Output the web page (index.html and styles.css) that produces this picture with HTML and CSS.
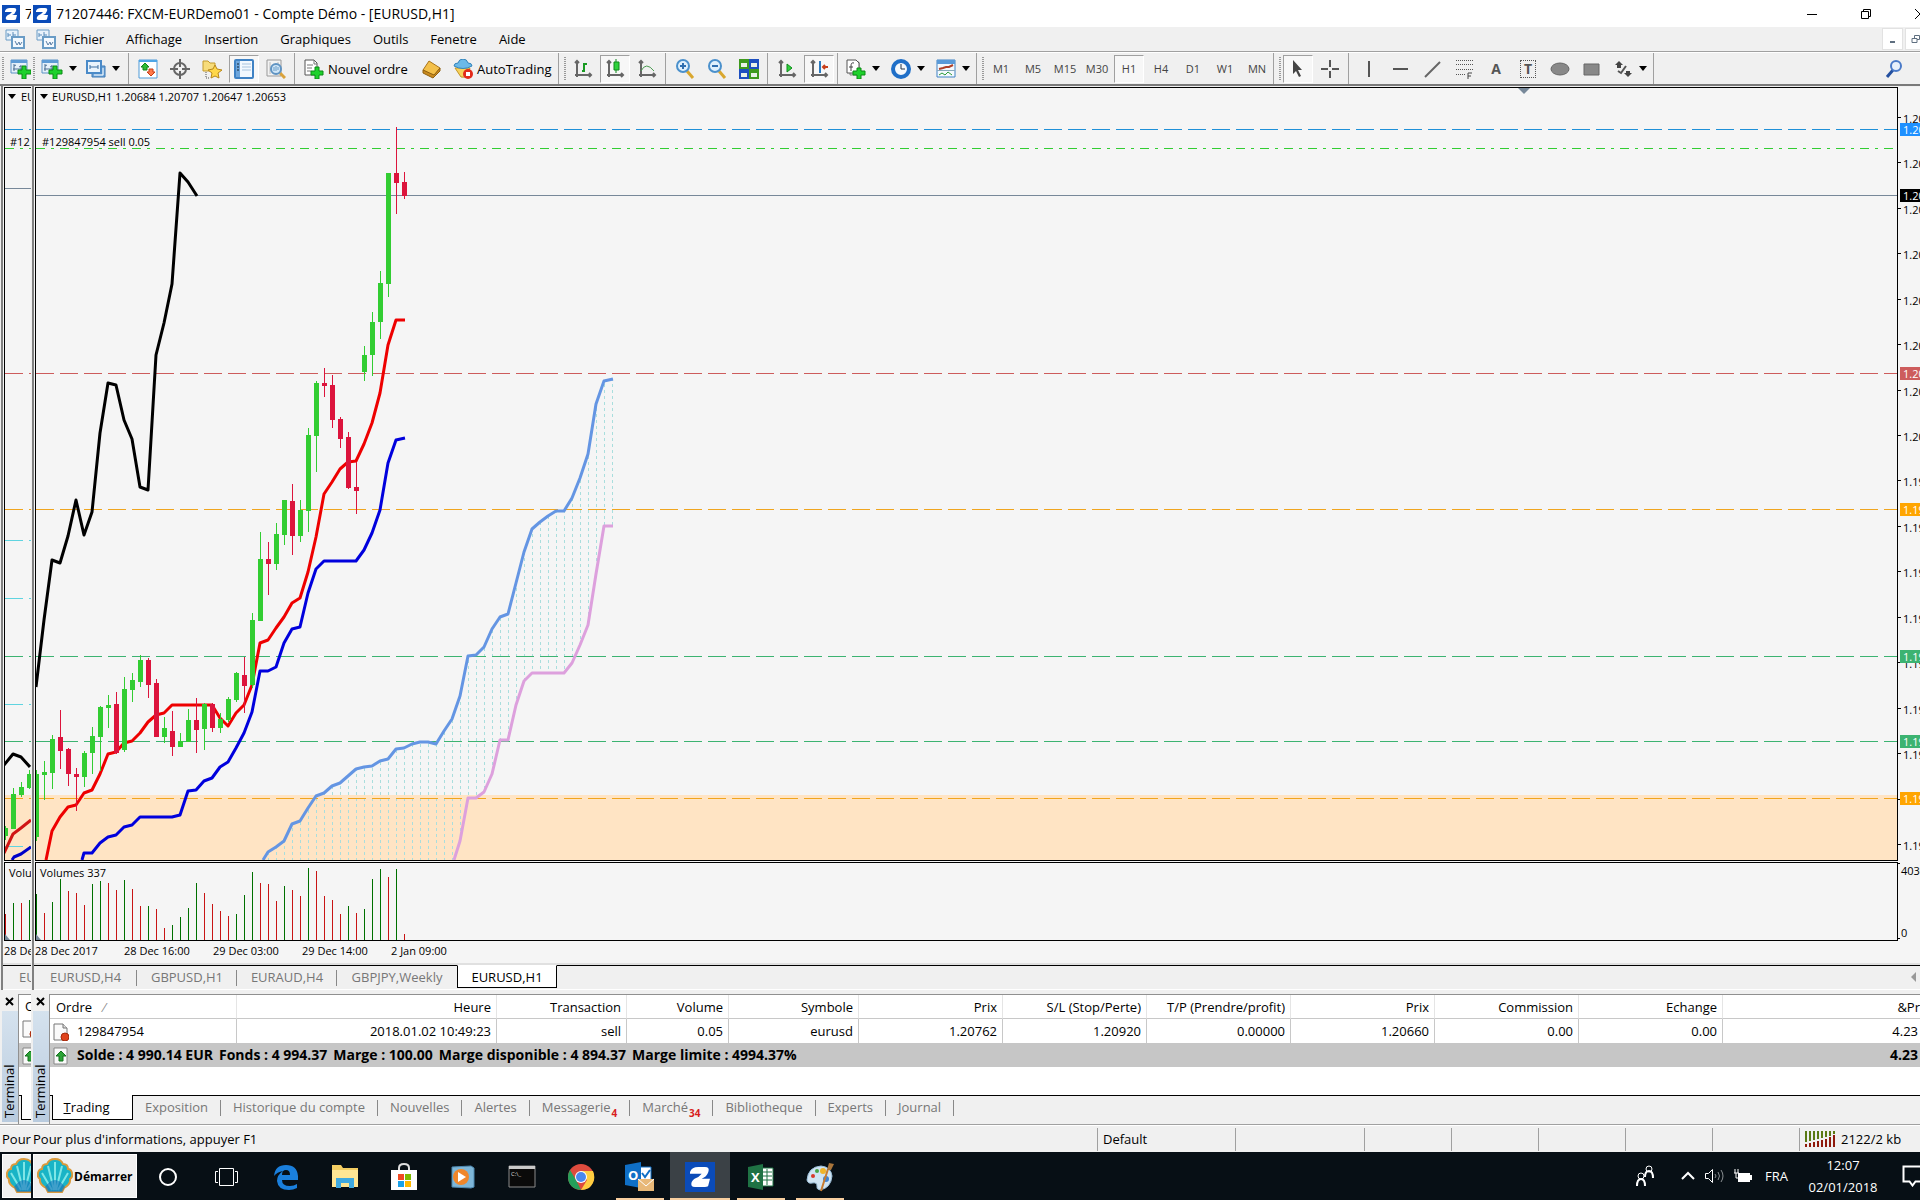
FILE: index.html
```html
<!DOCTYPE html>
<html lang="fr">

<head>
    <meta charset="UTF-8">
    <meta name="viewport" content="width=device-width, initial-scale=1.0">
    <title>71207446: FXCM-EURDemo01 - Compte Démo</title>
    <link rel="stylesheet" href="styles.css">
</head>

<body>
    <!-- shared icons -->
    <svg class="defs" aria-hidden="true">
        <symbol id="logo" viewBox="0 0 18 18">
            <rect width="18" height="18" fill="#0b4bb8" />
            <path d="M3 6Q4 3 8 3h4q3 0 2 3-1 3-4 4h5l-1 4q0 1-2 1H6q-3 0-2-3 1-2 4-3l2-2H3z" fill="#fff" />
        </symbol>
        <symbol id="windows" viewBox="0 0 20 20">
            <path d="M1 1h12v10H1z" fill="#e8f2fb" stroke="#6a9cc6" />
            <path d="M3 4v4M3 6h3M8 3v5M8 6h3" stroke="#5b8dbb" fill="none" />
            <path d="M7 8h12v11H7z" fill="#f4f9fe" stroke="#6a9cc6" stroke-width="2" />
            <path d="M10 12l2 4 2-3 1 3 2-3" stroke="#5b7fa6" fill="none" />
        </symbol>
        <symbol id="newchart" viewBox="0 0 22 20">
            <path d="M1 1h16v13H1z" fill="#e4f0fa" stroke="#5c93c4" />
            <path d="M1 1h16v3H1z" fill="#5c9bd6" />
            <path d="M4 5v7M3 10h9M11 6v6M4 7l2-1M9 8l2-1" stroke="#4b6f92" fill="none" />
            <path d="M12 7h4v4h5v4h-5v5h-4v-5H8v-4h4z" fill="#1ed12c" stroke="#0b8a14" />
        </symbol>
        <symbol id="order" viewBox="0 0 16 18">
            <path d="M1 1h9l4 4v12H1z" fill="#fafafa" stroke="#777" />
            <path d="M10 1v4h4" fill="#ddd" stroke="#777" />
            <circle cx="12" cy="14" r="4" fill="#e0431c" stroke="#a42a0c" />
        </symbol>
        <symbol id="balance" viewBox="0 0 16 18">
            <path d="M1 1h13v16H1z" fill="#fafafa" stroke="#888" />
            <path d="M8 4l5 5h-3v5H6V9H3z" fill="#2ca336" stroke="#12701c" />
        </symbol>
        <symbol id="cross" viewBox="0 0 9 9">
            <path d="M1 1l7 7M8 1L1 8" stroke="#000" stroke-width="2" />
        </symbol>
        <symbol id="shell" viewBox="0 0 36 38">
            <path d="M11 35L9 31Q2 27 3 22 0 20 1 16q1-4 4-4 0-5 5-5 2-5 8-5t8 5q5 0 5 5 3 0 4 4 1 4-2 6 1 5-6 9l-2 4z" fill="#19b4c6" stroke="#d99a3c" stroke-width="2" />
            <path d="M18 33V5M17 33L11 9M19 33l6-24M15 33L5 16M21 33l10-17" stroke="#7fe6e6" stroke-width="2" fill="none" />
            <path d="M8 30q10-14 20 0l-3 5H11z" fill="#1470b8" opacity=".6" />
        </symbol>
        <pattern id="hatch" width="8" height="6" patternUnits="userSpaceOnUse">
            <path d="M4.5 0v3" stroke="#a9dedd" />
        </pattern>
    </svg>

    <div class="desk">
        <!-- left monitor edge -->
        <div class="screen edge" aria-hidden="true">
            <div class="titlebar"><svg class="logo"><use href="#logo" /></svg><span class="title">7</span></div>
            <div class="menubar"><svg class="icon"><use href="#windows" /></svg></div>
            <div class="toolbar"><div class="group first"><i class="grip"></i><span class="tool drop"><svg class="icon wide"><use href="#newchart" /></svg></span></div></div>
            <div class="mdi">
                <div class="chart">
                    <svg class="plot">
                        <rect y="707" width="100%" height="100%" fill="#ffe4c4" />
                        <g class="levels">
                            <path d="M0 41.5H40" stroke="#1e90d8" />
                            <path class="dashdot" d="M0 60.5H40" stroke="#32cd32" />
                            <path class="solid" d="M0 100.5H40" stroke="#778899" />
                            <path d="M0 285.5H40" stroke="#cd5c5c" />
                            <path d="M0 421.5H40M0 710.5H40" stroke="#f0a51e" />
                            <path d="M0 568.5H40M0 653.5H40" stroke="#3cb371" />
                            <path d="M0 452.5H40M0 510.5H40M0 616.5H40M0 758.5H40" stroke="#5fd4e0" />
                        </g>
                        <g transform="translate(-5 -88)">
                            <path class="wick up" d="M5.5 826V840M13.5 788V829M21.5 782V797M29.5 770V789" />
                            <path class="body up" d="M5.5 828V836M13.5 794V829M21.5 787V795M29.5 774V788" />
                            <path class="line" stroke="#000" d="M4 765L13 754 21 757 30 767" />
                            <path class="line" stroke="#d01515" d="M4 853L13 834 21 828 31 820" />
                            <path class="line" stroke="#0000c8" d="M12 860L14 857 21 854 31 847" />
                        </g>
                        <path d="M3 6h8l-4 5z" />
                        <text x="16" y="13">EU</text>
                        <text x="5" y="58">#12</text>
                    </svg>
                    <svg class="volumes">
                        <g transform="translate(-5 -863)">
                            <path class="vol down" d="M5.5 914V940M21.5 903V940" />
                            <path class="vol up" d="M13.5 903V940M29.5 900V940" />
                            <path d="M5 934l5 6h-5z" fill="#778899" />
                        </g>
                        <text x="4" y="14">Volum</text>
                    </svg>
                    <div class="dates"><span>28 De</span></div>
                </div>
                <div class="charttabs"><button class="cut">EU</button></div>
            </div>
            <div class="terminal">
                <div class="side"><button class="close" tabindex="-1"><svg width="9" height="9"><use href="#cross" /></svg></button><span>Terminal</span></div>
                <div class="panel">
                    <div class="peek"><span>O</span><svg class="mini"><use href="#order" /></svg><div class="total"><svg class="mini"><use href="#balance" /></svg></div></div>
                    <div class="tabs"><button class="active" tabindex="-1"></button></div>
                </div>
            </div>
            <div class="status"><span class="hint">Pour</span></div>
            <div class="taskbar"><button class="start" tabindex="-1"><svg class="shell"><use href="#shell" /></svg></button></div>
        </div>

        <!-- main screen -->
        <div class="screen main">
            <header class="titlebar">
                <svg class="logo"><use href="#logo" /></svg>
                <span class="title">71207446: FXCM-EURDemo01 - Compte Démo - [EURUSD,H1]</span>
                <div class="winbtns">
                    <button aria-label="Réduire"><svg width="12" height="12"><path d="M1 6.5h10" stroke="#000" /></svg></button>
                    <button aria-label="Restaurer"><svg width="12" height="12"><path d="M1.5 3.5h7v7h-7zM3.5 3V1.5h7v7H9" stroke="#000" fill="none" /></svg></button>
                    <button aria-label="Fermer"><svg width="12" height="12"><path d="M1 1l10 10M11 1L1 11" stroke="#000" /></svg></button>
                </div>
            </header>

            <nav class="menubar">
                <svg class="icon"><use href="#windows" /></svg>
                <button>Fichier</button>
                <button>Affichage</button>
                <button>Insertion</button>
                <button>Graphiques</button>
                <button>Outils</button>
                <button>Fenetre</button>
                <button>Aide</button>
                <div class="mdibtns">
                    <button aria-label="Réduire le graphique"><svg width="8" height="10"><path d="M1 8h5" stroke="#5f6f80" stroke-width="2" /></svg></button>
                    <button aria-label="Restaurer le graphique"><svg width="10" height="10"><path d="M1 4.5h5v4H1zM3.5 4V1.5h5v4H6" stroke="#5f6f80" fill="none" /></svg></button>
                </div>
            </nav>

            <div class="toolbar">
                <div class="group first">
                    <i class="grip"></i>
                    <button class="tool drop" aria-label="Nouveau graphique"><svg class="icon wide"><use href="#newchart" /></svg></button>
                    <button class="tool drop" aria-label="Profils">
                        <svg class="icon" viewBox="0 0 20 20">
                            <path d="M6 7h13v11H6z" fill="#6ea6da" stroke="#3c78b4" />
                            <path d="M1 2h14v12H1z" fill="#eaf4fc" stroke="#4a8ac8" stroke-width="2" />
                            <path d="M4 8h8M4 6v4M12 6v4" stroke="#3c6ea0" />
                            <path d="M8 16h9v-7" stroke="#fff" fill="none" />
                        </svg>
                    </button>
                    <i class="sep"></i>
                    <button class="tool" aria-label="Observation du marché">
                        <svg class="icon" viewBox="0 0 20 20">
                            <path d="M1 1h18v18H1z" fill="#fff" stroke="#4f9bd8" /><path d="M1 1h18v2H1z" fill="#4fa6e6" />
                            <path d="M7 4l4 4H9v3H5V8H3z" fill="#2dbb34" stroke="#128418" />
                            <path d="M13 17l-4-4h2v-3h4v3h2z" fill="#ff7a4a" stroke="#c83c14" />
                        </svg>
                    </button>
                    <button class="tool" aria-label="Fenêtre des données">
                        <svg class="icon" viewBox="0 0 20 20"><circle cx="10" cy="10" r="6" fill="none" stroke="#666" stroke-width="2" /><path d="M10 0v8M10 12v8M0 10h8M12 10h8" stroke="#666" stroke-width="2" /></svg>
                    </button>
                    <button class="tool" aria-label="Navigateur">
                        <svg class="icon" viewBox="0 0 20 20">
                            <path d="M1 2h5l2 2h5v8H1z" fill="#f7dc7a" stroke="#c39a2c" />
                            <path d="M4 13v6h4" stroke="#555" stroke-dasharray="1 1" fill="none" />
                            <path d="M13 6l2 4 5 1-4 3 1 5-4-2-4 2 1-5-4-3 5-1z" fill="#ffd84a" stroke="#b8871a" />
                        </svg>
                    </button>
                    <button class="tool pressed" aria-label="Terminal">
                        <svg class="icon" viewBox="0 0 20 20">
                            <rect x="1" y="1" width="18" height="18" rx="1" fill="#f2f8fe" stroke="#3f82c4" stroke-width="2" />
                            <path d="M2 2h4v16H2z" fill="#6ea6dc" /><path d="M8 5h9M8 8h9M8 11h9" stroke="#a9c4de" />
                            <path d="M3 5h2M3 8h2M3 11h2" stroke="#123" />
                        </svg>
                    </button>
                    <button class="tool" aria-label="Testeur de stratégie">
                        <svg class="icon" viewBox="0 0 20 20">
                            <path d="M1 1h14v16H1z" fill="#f3f3f3" stroke="#999" /><path d="M4 3v12M12 3v4" stroke="#bbb" />
                            <path d="M14 14l5 5" stroke="#d9a23c" stroke-width="3" />
                            <circle cx="10" cy="10" r="5" fill="#cfe6f8" stroke="#5f93c2" stroke-width="2" />
                            <path d="M8 8v4M10 7v5M12 8v3" stroke="#6a9cc6" />
                        </svg>
                    </button>
                    <i class="sep"></i>
                    <button class="tool labelled order">
                        <svg class="icon" viewBox="0 0 20 20">
                            <path d="M1 1h9l3 3v12H1z" fill="#fff" stroke="#555" /><path d="M10 1v4h3M3 6h6M3 9h5M3 12h4" stroke="#777" fill="none" />
                            <path d="M11 8h4v4h4v4h-4v4h-4v-4H7v-4h4z" fill="#1ed12c" stroke="#0b8a14" />
                        </svg>Nouvel ordre</button>
                    <button class="tool" aria-label="MetaEditor">
                        <svg class="icon" viewBox="0 0 20 20"><path d="M2 11L8 2l11 7-6 8z" fill="#f3c04a" stroke="#a9741a" /><path d="M2 11v3l10 5 7-7V9l-6 7z" fill="#c98a1e" stroke="#8f6010" /></svg>
                    </button>
                    <button class="tool labelled auto">
                        <svg class="icon" viewBox="0 0 20 20">
                            <path d="M2 9l6 9q6 2 9-9z" fill="#f7d25c" stroke="#c29526" />
                            <path d="M1 7q0-3 4-3 1-4 5-4t5 4q4 0 4 3-9 5-18 0z" fill="#6bb9e8" stroke="#3585bb" />
                            <circle cx="15" cy="15" r="5" fill="#e22a1a" /><path d="M13 13h4v4h-4z" fill="#fff" />
                        </svg>AutoTrading</button>
                </div>
                <div class="group">
                    <i class="grip"></i>
                    <button class="tool" aria-label="Graphique en barres"><svg class="icon" viewBox="0 0 20 20"><path class="axes" d="M4 2v16M2 16h16M2 4l2-2 2 2M16 14l2 2-2 2" /><path d="M11 4v9M11 5h3M9 12h2" stroke="#189a22" stroke-width="2" /></svg></button>
                    <button class="tool pressed" aria-label="Chandeliers"><svg class="icon" viewBox="0 0 20 20"><path class="axes" d="M4 2v16M2 16h16M2 4l2-2 2 2M16 14l2 2-2 2" /><path d="M11 0v14" stroke="#0f8a1a" /><path d="M9 3h5v8H9z" fill="#2fd23c" stroke="#0f8a1a" /></svg></button>
                    <button class="tool" aria-label="Courbe"><svg class="icon" viewBox="0 0 20 20"><path class="axes" d="M4 2v16M2 16h16M2 4l2-2 2 2M16 14l2 2-2 2" /><path d="M4 12q5-10 13 0" stroke="#4a9a50" fill="none" /></svg></button>
                    <i class="sep"></i>
                    <button class="tool" aria-label="Zoom avant"><svg class="icon" viewBox="0 0 20 20"><path d="M12 12l6 7" stroke="#d9a72e" stroke-width="3" /><circle cx="8" cy="7" r="6" fill="#dff0fc" stroke="#4a90cc" stroke-width="2" /><path d="M5 7h6M8 4v6" stroke="#2f6fb0" stroke-width="2" /></svg></button>
                    <button class="tool" aria-label="Zoom arrière"><svg class="icon" viewBox="0 0 20 20"><path d="M12 12l6 7" stroke="#d9a72e" stroke-width="3" /><circle cx="8" cy="7" r="6" fill="#dff0fc" stroke="#4a90cc" stroke-width="2" /><path d="M5 7h6" stroke="#2f6fb0" stroke-width="2" /></svg></button>
                    <button class="tool" aria-label="Mosaïque"><svg class="icon" viewBox="0 0 20 20"><path d="M0 0h10v10H0zM10 10h10v10H10z" fill="#3f9a1e" /><path d="M10 0h10v10H10zM0 10h10v10H0z" fill="#1d4fc0" /><path d="M2 4h6v4H2zM12 4h6v4h-6zM2 14h6v4H2zM12 14h6v4h-6z" fill="#e8f2e8" /></svg></button>
                    <i class="sep"></i>
                    <button class="tool" aria-label="Défilement automatique"><svg class="icon" viewBox="0 0 20 20"><path class="axes" d="M4 2v16M2 16h16M2 4l2-2 2 2M16 14l2 2-2 2" /><path d="M10 5l5 4-5 4z" fill="#2fd23c" stroke="#0f8a1a" /></svg></button>
                    <button class="tool pressed" aria-label="Décalage"><svg class="icon" viewBox="0 0 20 20"><path class="axes" d="M4 2v16M2 16h16M2 4l2-2 2 2M16 14l2 2-2 2" /><path d="M11 2v12" stroke="#2a7ac0" stroke-width="2" /><path d="M19 8h-5M16 6l-2 2 2 2" stroke="#c8401c" stroke-width="2" fill="none" /></svg></button>
                    <i class="sep"></i>
                    <button class="tool drop" aria-label="Indicateurs"><svg class="icon" viewBox="0 0 20 20"><path d="M4 3h9v13H4z" fill="#ddd" stroke="#888" /><path d="M1 1h9l3 3v10H1z" fill="#fff" stroke="#555" /><path d="M8 4q-3-1-3 3v5M3 8h4" stroke="#444" fill="none" /><path d="M11 9h4v3h4v4h-4v4h-4v-4H7v-4h4z" fill="#1ed12c" stroke="#0b8a14" /></svg></button>
                    <button class="tool drop" aria-label="Périodicité"><svg class="icon" viewBox="0 0 20 20"><circle cx="10" cy="10" r="8" fill="#f4f8fc" stroke="#1f6fc8" stroke-width="4" /><path d="M10 5v5h4" stroke="#234" fill="none" /></svg></button>
                    <button class="tool drop" aria-label="Modèles"><svg class="icon" viewBox="0 0 20 20"><path d="M1 1h18v17H1z" fill="#f4f9fe" stroke="#3f82c4" /><path d="M1 1h18v4H1z" fill="#5a9ad8" /><path d="M3 10l4-1 3-1 3 0 4-2" stroke="#b04028" fill="none" stroke-width="2" /><path d="M1 11.500h18" stroke="#8ab" /><path d="M3 16l3-2 3 2 3-3 4 3" stroke="#2c9a38" fill="none" /></svg></button>
                </div>
                <div class="group">
                    <i class="grip"></i>
                    <button class="tool tf">M1</button>
                    <button class="tool tf">M5</button>
                    <button class="tool tf">M15</button>
                    <button class="tool tf">M30</button>
                    <button class="tool tf pressed">H1</button>
                    <button class="tool tf">H4</button>
                    <button class="tool tf">D1</button>
                    <button class="tool tf">W1</button>
                    <button class="tool tf">MN</button>
                </div>
                <div class="group">
                    <i class="grip"></i>
                    <button class="tool pressed" aria-label="Curseur"><svg class="icon" viewBox="0 0 20 20"><path d="M5 1v14l3-3 3 6 2-1-3-6h4z" fill="#444" /></svg></button>
                    <button class="tool" aria-label="Croix"><svg class="icon" viewBox="0 0 20 20"><path d="M10 1v7M10 12v7M1 10h7M12 10h7" stroke="#555" stroke-width="2" /></svg></button>
                    <i class="sep"></i>
                    <button class="tool" aria-label="Ligne verticale"><svg class="icon" viewBox="0 0 20 20"><path d="M11 2v16" stroke="#555" stroke-width="2" /></svg></button>
                    <button class="tool" aria-label="Ligne horizontale"><svg class="icon" viewBox="0 0 20 20"><path d="M3 10h15" stroke="#555" stroke-width="2" /></svg></button>
                    <button class="tool" aria-label="Ligne de tendance"><svg class="icon" viewBox="0 0 20 20"><path d="M3 18L18 3" stroke="#666" stroke-width="2" /></svg></button>
                    <button class="tool" aria-label="Fibonacci"><svg class="icon" viewBox="0 0 20 20"><path d="M2 1.500h17M2 5.500h17M2 10.500h17M2 15.500h10" stroke="#555" stroke-dasharray="1 1" /><path d="M14 20v-6h4M14 17h3" stroke="#444" fill="none" /></svg></button>
                    <button class="tool letter" aria-label="Texte">A</button>
                    <button class="tool letter" aria-label="Étiquette"><span class="boxed">T</span></button>
                    <button class="tool" aria-label="Ellipse"><svg class="icon" viewBox="0 0 20 20"><ellipse cx="10" cy="10" rx="9" ry="6" fill="#888" stroke="#666" /></svg></button>
                    <button class="tool" aria-label="Rectangle"><svg class="icon" viewBox="0 0 20 20"><path d="M2 5h15v11H2z" fill="#888" stroke="#666" /></svg></button>
                    <button class="tool drop" aria-label="Flèches"><svg class="icon" viewBox="0 0 20 20"><path d="M6 2l4 4H8v3H4V6H2zM15 18l-4-4h2v-2h4v2h2z" fill="#444" /><path d="M5 12l3 2 5-7" stroke="#555" fill="none" stroke-width="2" /></svg></button>
                </div>
                <div class="group tail">
                    <button class="tool" aria-label="Rechercher"><svg class="icon" viewBox="0 0 20 20"><path d="M9 11l-6 7" stroke="#2450a0" stroke-width="3" /><circle cx="12" cy="7" r="5" fill="#e8f0fb" stroke="#4a7ac8" stroke-width="2" /></svg></button>
                </div>
            </div>

            <main class="mdi">
                <div class="chart">
                    <svg class="plot">
                        <rect y="707" width="100%" height="100%" fill="#ffe4c4" />
                        <g class="levels">
                            <line x2="100%" y1="41.5" y2="41.5" stroke="#1e90d8" />
                            <line class="dashdot" x2="100%" y1="60.5" y2="60.5" stroke="#32cd32" />
                            <line class="solid" x2="100%" y1="107.5" y2="107.5" stroke="#778899" />
                        </g>
                        <g transform="translate(-36 -88)">
                            <!-- ichimoku cloud -->
                            <path fill="url(#hatch)" d="M263 860L268 852 276 847 284 841 292 824 300 821 308 808 316 796 324 793 332 786 340 783 348 776 356 769 364 767 372 766 380 761 388 759 396 749 404 748 412 744 420 742 428 742 436 744 444 731 452 719 460 696 468 656 476 655 484 647 492 629 500 617 508 614 516 583 524 552 532 529 540 522 548 516 556 511 564 511 572 498 580 478 588 454 596 404 604 381 614 379V526H604L596 574 588 625 580 645 572 663 564 673H532L524 681 516 705 508 740H500L492 774 484 792 476 798H468L460 841 454 860z" />
                        </g>
                        <g class="levels">
                            <line x2="100%" y1="285.5" y2="285.5" stroke="#cd5c5c" />
                            <line x2="100%" y1="421.5" y2="421.5" stroke="#f0a51e" />
                            <line x2="100%" y1="568.5" y2="568.5" stroke="#3cb371" />
                            <line x2="100%" y1="653.5" y2="653.5" stroke="#3cb371" />
                            <line x2="100%" y1="710.5" y2="710.5" stroke="#f0a51e" />
                        </g>
                        <g transform="translate(-36 -88)">
                            <path class="line" stroke="#000" d="M36 687L44 620 52 560 60 563 68 536 76 500 84 535 92 512 100 433 108 383 116 385 124 420 132 439 140 487 148 490 156 355 164 323 172 284 180 173 188 182 197 196" />
                            <path class="line" stroke="#ee0000" d="M46 860L52 831 60 817 68 807 76 805 84 793 92 790 100 774 108 754 116 752 124 743 132 741 140 733 148 722 156 715 164 713 172 705H212L220 718 228 726 236 713 244 705 252 685 260 643 268 640 276 628 284 617 292 603 300 598 308 572 316 537 324 494 332 482 340 469 348 462 356 461 364 444 372 423 380 393 388 345 396 320H405" />
                            <path class="line" stroke="#0000dd" d="M82 860L84 853H92L100 843 108 837 116 835 124 827 132 825 140 817H172L180 815 188 791 196 790 204 781 212 778 220 767 228 762 236 748 244 733 252 712 260 671H268L276 667 284 643 292 629 300 627 308 593 316 569 324 561H356L364 550 372 533 380 510 388 463 396 440 405 438" />
                            <path class="line" stroke="#dda0dd" d="M454 860L460 841 468 798H476L484 792 492 774 500 740H508L516 705 524 681 532 673H564L572 663 580 645 588 625 596 574 604 526H613" />
                            <path class="line" stroke="#6495e3" d="M263 860L268 852 276 847 284 841 292 824 300 821 308 808 316 796 324 793 332 786 340 783 348 776 356 769 364 767 372 766 380 761 388 759 396 749 404 748 412 744 420 742 428 742 436 744 444 731 452 719 460 696 468 656 476 655 484 647 492 629 500 617 508 614 516 583 524 552 532 529 540 522 548 516 556 511 564 511 572 498 580 478 588 454 596 404 604 381 613 379" />
                            <!-- candles -->
                            <path class="wick up" d="M36.5 770V841M44.5 761V800M52.5 735V789M84.500 751V787M92.500 727V774M100.500 706V771M108.500 695V728M124.500 677V752M132.500 673V702M140.500 655V687M164.500 717V743M180.500 733V747M188.500 709V742M204.500 703V750M220.500 713V733M228.500 697V722M236.500 672V702M252.500 613V688M260.500 532V621M276.500 523V570M284.500 500V545M300.500 500V542M308.500 428V532M316.500 381V472M364.500 346V381M372.500 312V376M380.500 271V339M388.500 173V297" />
                            <path class="body up" d="M36.5 774V837M44.5 772V775M52.5 739V773M84.500 753V777M92.500 736V753M100.500 707V737M108.500 705V708M124.500 689V750M132.500 680V690M140.500 660V682M164.500 728V737M180.500 741V747M188.500 720V742M204.500 704V729M220.500 719V728M228.500 699V720M236.500 673V700M252.500 620V685M260.500 559V621M276.500 534V564M284.500 500V535M300.500 510V536M308.500 435V511M316.500 383V436M364.500 355V372M372.500 322V355M380.500 283V322M388.500 173V284" />
                            <path class="wick down" d="M60.5 710V769M68.5 748V786M76.5 768V811M116.500 692V754M148.500 658V698M156.500 679V737M172.500 711V756M196.500 698V753M212.500 703V732M244.500 657V713M268.500 542V595M292.500 484V555M324.500 368V397M332.500 375V428M340.500 417V448M348.500 432V489M356.500 462V514M396.500 127V214M404.500 172V199" />
                            <path class="body down" d="M60.5 737V751M68.5 749V774M76.5 774V777M116.500 704V753M148.500 660V685M156.500 683V737M172.500 731V747M196.500 720V730M212.500 704V728M244.500 675V686M268.500 559V564M292.500 501V536M324.500 383V386M332.500 385V420M340.500 419V439M348.500 437V488M356.500 487V491M396.500 173V183M404.500 182V196" />
                        </g>
                        <path d="M4 6h8l-4 5z" />
                        <path d="M1482 0h12l-6 6z" fill="#778899" />
                        <text x="16" y="13">EURUSD,H1</text>
                        <text x="79" y="13">1.20684 1.20707 1.20647 1.20653</text>
                        <text x="6" y="58">#129847954 sell 0.05</text>
                    </svg>
                    <svg class="scale">
                        <path d="M0 30.500h3M0 75.500h3M0 121.500h3M0 166.500h3M0 212.500h3M0 257.500h3M0 303.500h3M0 348.500h3M0 393.500h3M0 439.500h3M0 484.500h3M0 530.500h3M0 575.500h3M0 621.500h3M0 666.500h3M0 712.500h3M0 757.500h3" stroke="#000" />
                        <g>
                            <text x="5" y="36">1.20</text>
                            <text x="5" y="81">1.20</text>
                            <text x="5" y="127">1.20</text>
                            <text x="5" y="172">1.20</text>
                            <text x="5" y="218">1.20</text>
                            <text x="5" y="263">1.20</text>
                            <text x="5" y="309">1.20</text>
                            <text x="5" y="354">1.20</text>
                            <text x="5" y="399">1.19</text>
                            <text x="5" y="445">1.19</text>
                            <text x="5" y="490">1.19</text>
                            <text x="5" y="536">1.19</text>
                            <text x="5" y="581">1.19</text>
                            <text x="5" y="627">1.19</text>
                            <text x="5" y="672">1.19</text>
                            <text x="5" y="763">1.19</text>
                        </g>
                        <g class="tags">
                            <rect x="2" y="36" width="24" height="13" fill="#1e90ff" /><text x="5" y="47">1.20</text>
                            <rect x="2" y="102" width="24" height="13" fill="#000" /><text x="5" y="113">1.20</text>
                            <rect x="2" y="280" width="24" height="13" fill="#cd5c5c" /><text x="5" y="291">1.20</text>
                            <rect x="2" y="416" width="24" height="13" fill="#ffa500" /><text x="5" y="427">1.19</text>
                            <rect x="2" y="563" width="24" height="13" fill="#3cb371" /><text x="5" y="574">1.19</text>
                            <rect x="2" y="648" width="24" height="13" fill="#3cb371" /><text x="5" y="659">1.19</text>
                            <rect x="2" y="705" width="24" height="13" fill="#ffa500" /><text x="5" y="716">1.19</text>
                        </g>
                    </svg>
                    <svg class="volumes">
                        <g transform="translate(-36 -863)">
                            <path class="vol up" d="M36.5 894V940M52.5 902V940M60.5 879V940M92.500 884V940M100.500 881V940M124.500 880V940M148.500 906V940M172.500 925V940M180.500 917V940M188.500 908V940M196.500 883V940M236.500 914V940M244.500 895V940M252.500 872V940M284.500 886V940M308.500 868V940M348.500 906V940M364.500 909V940M372.500 879V940M380.500 869V940M396.500 869V940" />
                            <path class="vol down" d="M44.5 913V940M68.5 891V940M76.5 893V940M84.500 905V940M108.500 883V940M116.500 890V940M132.500 889V940M140.500 906V940M156.500 909V940M164.500 928V940M204.500 893V940M212.500 904V940M220.500 911V940M228.500 916V940M260.500 883V940M268.500 884V940M276.500 901V940M292.500 890V940M300.500 896V940M316.500 871V940M324.500 896V940M332.500 900V940M340.500 914V940M356.500 913V940M388.500 877V940M404.500 934V940" />
                            <path d="M36 934l5 6h-5z" fill="#778899" />
                        </g>
                        <text x="4" y="14">Volumes 337</text>
                    </svg>
                    <svg class="scale">
                        <path d="M0 1.500h2M0 76.500h2" stroke="#000" />
                        <text x="3" y="13">4030</text>
                        <text x="3" y="75">0</text>
                    </svg>
                    <div class="dates">
                        <span>28 Dec 2017</span>
                        <span>28 Dec 16:00</span>
                        <span>29 Dec 03:00</span>
                        <span>29 Dec 14:00</span>
                        <span>2 Jan 09:00</span>
                    </div>
                </div>
                <div class="charttabs">
                    <button>EURUSD,H4</button>
                    <button>GBPUSD,H1</button>
                    <button>EURAUD,H4</button>
                    <button class="long">GBPJPY,Weekly</button>
                    <button class="active">EURUSD,H1</button>
                    <i class="scroll"></i>
                </div>
            </main>

            <section class="terminal">
                <div class="side">
                    <button class="close" aria-label="Fermer le terminal"><svg width="9" height="9"><use href="#cross" /></svg></button>
                    <span>Terminal</span>
                </div>
                <div class="panel">
                    <table>
                        <colgroup>
                            <col class="c-order"><col class="c-time"><col class="c-type"><col class="c-vol"><col class="c-type">
                            <col class="c-price"><col class="c-price"><col class="c-price"><col class="c-price"><col class="c-price"><col class="c-price"><col>
                        </colgroup>
                        <thead>
                            <tr>
                                <th>Ordre <i class="sort">⁄</i></th>
                                <th>Heure</th>
                                <th>Transaction</th>
                                <th>Volume</th>
                                <th>Symbole</th>
                                <th>Prix</th>
                                <th>S/L (Stop/Perte)</th>
                                <th>T/P (Prendre/profit)</th>
                                <th>Prix</th>
                                <th>Commission</th>
                                <th>Echange</th>
                                <th>&amp;Pr</th>
                            </tr>
                        </thead>
                        <tbody>
                            <tr>
                                <td><svg class="mini"><use href="#order" /></svg>129847954</td>
                                <td>2018.01.02 10:49:23</td>
                                <td>sell</td>
                                <td>0.05</td>
                                <td>eurusd</td>
                                <td>1.20762</td>
                                <td>1.20920</td>
                                <td>0.00000</td>
                                <td>1.20660</td>
                                <td>0.00</td>
                                <td>0.00</td>
                                <td>4.23</td>
                            </tr>
                            <tr class="total">
                                <td colspan="11"><svg class="mini"><use href="#balance" /></svg><span>Solde : 4 990.14 EUR</span><span>Fonds : 4 994.37</span><span>Marge : 100.00</span><span>Marge disponible : 4 894.37</span><span>Marge limite : 4994.37%</span></td>
                                <td>4.23</td>
                            </tr>
                        </tbody>
                    </table>
                    <div class="tabs">
                        <button class="active"><u>T</u>rading</button>
                        <button>Exposition</button>
                        <button>Historique du compte</button>
                        <button>Nouvelles</button>
                        <button>Alertes</button>
                        <button>Messagerie<sub>4</sub></button>
                        <button>Marché<sub>34</sub></button>
                        <button>Bibliotheque</button>
                        <button>Experts</button>
                        <button>Journal</button>
                    </div>
                </div>
            </section>

            <footer class="status">
                <span class="hint">Pour plus d'informations, appuyer F1</span>
                <span class="cell profile">Default</span>
                <span class="cell time"></span>
                <span class="cell"></span>
                <span class="cell"></span>
                <span class="cell"></span>
                <span class="cell"></span>
                <span class="cell"></span>
                <span class="cell traffic">
                    <svg width="30" height="16"><path d="M1 0v11M5 0v10M9 0v9M13 0v8M17 0v7M21 0v6M25 0v5M29 0v3" stroke="#5a7a14" stroke-width="2" /><path d="M1 13v3M5 12v4M9 11v5M13 10v6M17 9v7M21 8v8M25 6v10M29 4v12" stroke="#8f1a0c" stroke-width="2" /></svg>
                    2122/2 kb
                </span>
            </footer>

            <div class="taskbar">
                <button class="start"><svg class="shell"><use href="#shell" /></svg>Démarrer</button>
                <button class="app" aria-label="Cortana"><svg width="26" height="26"><circle cx="13" cy="13" r="8" fill="none" stroke="#fff" stroke-width="2" /></svg></button>
                <button class="app" aria-label="Vue des tâches"><svg width="26" height="26"><path d="M5.5 4.500h14v17h-14zM4 7.500H1.500v11H4M21 7.500h2.500v11H21" fill="none" stroke="#fff" /></svg></button>
                <button class="app" aria-label="Edge"><svg width="26" height="26"><path d="M1 12Q2 1 13 1q11 0 12 11v4H9q0 6 8 6 4 0 7-2v4q-4 2-8 2Q5 26 4 17q0-6 6-10-6 1-9 5zM9 11h8q0-5-4-5t-4 5z" fill="#1a7fdc" fill-rule="evenodd" /></svg></button>
                <button class="app" aria-label="Explorateur"><svg width="26" height="26"><path d="M0 1h9l2 3h15v19H0z" fill="#f3cd62" /><path d="M0 6h26v17H0z" fill="#ffe694" /><path d="M4 14h18v10h-5v-5H9v5H4z" fill="#3fa9e0" /></svg></button>
                <button class="app" aria-label="Store"><svg width="28" height="28"><path d="M9 8V5q0-4 5-4t5 4v3" fill="none" stroke="#ddd" stroke-width="2" /><path d="M1 7h26v20H1z" fill="#fff" /><path d="M8 11h6v6H8z" fill="#f04a22" /><path d="M15 11h6v6h-6z" fill="#7fba00" /><path d="M8 18h6v6H8z" fill="#1ba1e8" /><path d="M15 18h6v6h-6z" fill="#ffb900" /></svg></button>
                <button class="app" aria-label="Lecteur multimédia"><svg width="26" height="26"><path d="M2 3l19-1 3 2v19l-3 1-19-1z" fill="#7eb6d8" stroke="#4d88b0" /><circle cx="11" cy="13" r="8" fill="#f0862a" /><path d="M8 8l8 5-8 5z" fill="#fff" /></svg></button>
                <button class="app" aria-label="Invite de commandes"><svg width="28" height="24"><path d="M1 1h26v21H1z" fill="#0a0a0a" stroke="#8a8a8a" /><path d="M1 1h26v3H1z" fill="#c9c9c9" /><text x="3" y="11" font-size="6" fill="#ddd">C:\_</text></svg></button>
                <button class="app" aria-label="Chrome"><svg width="28" height="28"><circle cx="14" cy="14" r="13" fill="#dd4b3e" /><path d="M3 7l6 10 5 10Q2 26 1 15q0-5 2-8z" fill="#25a05a" /><path d="M14 8h12q4 10-4 17-4 2-8 2l6-10z" fill="#ffcd40" /><circle cx="14" cy="14" r="6" fill="#fff" /><circle cx="14" cy="14" r="5" fill="#4a88ee" /></svg></button>
                <button class="app open" aria-label="Outlook"><svg width="30" height="30"><path d="M15 5h11v14H15z" fill="#fff" stroke="#0f6fc6" /><path d="M17 11l3 4 5-7" stroke="#0f6fc6" stroke-width="2" fill="none" /><path d="M0 3l16-3v26L0 23z" fill="#0f6fc6" /><text x="3" y="18" font-size="13" font-weight="700" fill="#fff">O</text><path d="M13 17h16v12H13z" fill="#e8b878" /><path d="M13 17l8 7 8-7" stroke="#fff" fill="none" /></svg></button>
                <button class="app open current" aria-label="Trading Station"><svg width="30" height="30"><use href="#logo" /></svg></button>
                <button class="app open" aria-label="Excel"><svg width="26" height="26"><path d="M14 4h11v18H14z" fill="#fff" stroke="#1f7244" /><path d="M15 8h9M15 12h9M15 16h9M19 5v16" stroke="#1f7244" /><path d="M0 3l15-3v26L0 23z" fill="#1f7244" /><text x="3" y="18" font-size="13" font-weight="700" fill="#fff">X</text></svg></button>
                <button class="app open" aria-label="Paint"><svg width="30" height="30"><path d="M2 18Q3 5 16 4q10 1 11 10-1 12-12 14-4-1-3-4 0-4-5-3-4 1-5-3z" fill="#cfe4f3" stroke="#9bbfda" /><circle cx="8" cy="14" r="2" fill="#d8392c" /><circle cx="12" cy="9" r="2" fill="#47a447" /><circle cx="18" cy="9" r="3" fill="#f0b429" /><circle cx="21" cy="17" r="3" fill="#3f82d0" /><path d="M16 29l7-22" stroke="#c77b30" stroke-width="2" /><path d="M22 8l2-7 5 1-3 6z" fill="#a8743a" /></svg></button>
                <div class="tray">
                    <svg width="18" height="22"><path d="M1 21q0-7 4-7t4 7M9 12q0-6 4-6t4 7" fill="none" stroke="#fff" stroke-width="2" /><circle cx="5" cy="11" r="3" fill="none" stroke="#fff" /><circle cx="13" cy="4" r="3" fill="none" stroke="#fff" /></svg>
                    <svg class="chevron" width="14" height="10"><path d="M1 8l6-6 6 6" fill="none" stroke="#fff" stroke-width="2" /></svg>
                    <svg width="20" height="16"><path d="M1.500 5.500h3l4-4v13l-4-4h-3z" fill="none" stroke="#fff" /><path d="M11 6q2 2 0 4M14 4q3 4 0 8M17 2q4 6 0 12" fill="none" stroke="#8a8f92" /></svg>
                    <svg width="20" height="14"><path d="M5 4h12v9H5zM17 6h2v5h-2z" fill="#fff" /><path d="M1 4h5M2 0v4M5 0v4M3 4v5h2" stroke="#fff" fill="none" /></svg>
                    <span class="lang">FRA</span>
                    <span class="clock">12:07<br>02/01/2018</span>
                    <svg class="notif" width="22" height="22"><path d="M1.500 1.500h20v15h-8l-3 4-3-4h-6z" fill="none" stroke="#fff" stroke-width="2" /></svg>
                </div>
            </div>
        </div>
    </div>
</body>

</html>
```
FILE: styles.css
```css
* {
    box-sizing: border-box;
}
body {
    margin: 0;
    overflow: hidden;
    background-color: #f0f0f0;
    color: #000;
    font-family: "Open Sans", "Noto Sans", sans-serif;
    font-size: 13px;
    white-space: nowrap;
}
button {
    display: flex;
    align-items: center;
    justify-content: center;
    margin: 0;
    padding: 0;
    border: 0;
    background: none;
    color: inherit;
    font: inherit;
}
svg {
    flex: none;
}
i {
    font-style: normal;
}
.defs {
    position: absolute;
    width: 0;
    height: 0;
}
.desk {
    display: flex;
    height: 100vh;
}
.screen {
    display: flex;
    flex-direction: column;
    overflow: hidden;
}
.edge {
    flex: 0 0 31px;
}
.main {
    flex: 1;
    min-width: 0;
}
.icon {
    width: 20px;
    height: 20px;
}
.icon.wide {
    width: 22px;
}

/* title + menu */
.titlebar {
    display: flex;
    align-items: center;
    flex: 0 0 27px;
    padding-left: 2px;
    background-color: #fff;
    font-size: 14px;
}
.logo {
    width: 18px;
    height: 18px;
    margin-right: 5px;
}
.winbtns {
    display: flex;
    gap: 42px;
    margin-left: auto;
    margin-right: -6px;
}
.menubar {
    display: flex;
    align-items: center;
    flex: 0 0 25px;
    padding-left: 5px;
    border-bottom: 1px solid #a0a0a0;
    gap: 22px;
}
.menubar .icon {
    margin-right: -14px;
}
.mdibtns {
    display: flex;
    gap: 2px;
    margin-left: auto;
    margin-right: -6px;
}
.mdibtns button {
    width: 21px;
    height: 22px;
    border: 1px solid #e2e2e2;
    background-color: #fff;
}

/* toolbar */
.toolbar {
    display: flex;
    flex: 0 0 34px;
    border-top: 1px solid #fff;
    border-bottom: 2px solid #7a7a7a;
}
.group {
    display: flex;
    align-items: center;
    padding-left: 4px;
    border-right: 1px solid #a0a0a0;
}
.group.first {
    padding-left: 1px;
}
.group.tail {
    flex: 1;
    justify-content: flex-end;
    padding-right: 10px;
    border: 0;
}
.grip {
    flex: none;
    width: 2px;
    height: 24px;
    margin: 0 1px;
    background: repeating-linear-gradient(#999 0 1px, #f0f0f0 1px 2px);
}
.sep {
    width: 6px;
    height: 100%;
    border-left: 2px solid #f0f0f0;
    background: linear-gradient(90deg, #a0a0a0 1px, #f0f0f0 1px);
}
.tool {
    flex: none;
    width: 32px;
    height: 28px;
}
.tool.pressed {
    width: 30px;
    margin: 0 1px;
    border: 1px solid;
    border-color: #a0a0a0 #fff #fff #a0a0a0;
    background-color: #f7f7f7;
}
.tool.drop {
    display: flex;
    align-items: center;
    width: 45px;
    justify-content: flex-start;
    padding-left: 5px;
    gap: 6px;
}
.tool.drop::after {
    content: "";
    border: 4px solid transparent;
    border-top: 5px solid #000;
    border-bottom: 0;
}
.tool.labelled {
    justify-content: flex-start;
    padding-left: 6px;
    gap: 4px;
}
.tool.order {
    width: 117px;
}
.tool.auto {
    width: 111px;
}
.tool.tf {
    font-size: 11px;
    color: #444;
}
.tool.letter {
    font-size: 14px;
    font-weight: 700;
    color: #555;
}
.boxed {
    width: 16px;
    border: 1px dotted #555;
    line-height: 16px;
}
.axes {
    fill: none;
    stroke: #666;
    stroke-width: 2;
}

/* chart window */
.mdi {
    display: flex;
    flex-direction: column;
    flex: 1;
    min-height: 0;
    margin-left: 1px;
    padding-top: 1px;
    border-left: 2px solid #808080;
}
.chart {
    display: grid;
    flex: 1;
    min-height: 0;
    grid-template-columns: minmax(0, 1fr) 22px;
    grid-template-rows: minmax(0, 1fr) 79px 21px;
    row-gap: 1px;
    padding-left: 1px;
    background-color: #f5f5f5;
    font-size: 11px;
}
.edge .chart {
    grid-template-columns: 60px;
}
.plot,
.volumes {
    width: 100%;
    height: 100%;
    border: 1px solid #000;
}
.scale {
    width: 22px;
    height: 100%;
}
.tags text {
    fill: #fff;
}
.levels {
    stroke-dasharray: 18 6;
}
.levels .dashdot {
    stroke-dasharray: 9 6 3 6;
}
.levels .solid {
    stroke-dasharray: none;
}
.line {
    fill: none;
    stroke-width: 3;
    stroke-linejoin: round;
}
.wick {
    stroke-width: 1;
}
.body {
    stroke-width: 5;
}
.up {
    stroke: #32cd32;
}
.down {
    stroke: #dc143c;
}
.vol.up {
    stroke: #007000;
}
.vol.down {
    stroke: #c81414;
}
.dates {
    display: flex;
    line-height: 18px;
}
.dates span {
    flex: 0 0 89px;
}
.charttabs {
    display: flex;
    align-items: flex-start;
    flex: 0 0 27px;
    border-top: 2px solid #e0e0e0;
    border-bottom: 1px solid #fff;
    color: #777;
}
.charttabs button {
    flex: 0 0 100px;
    height: 23px;
    border-top: 1px solid #000;
}
.charttabs button:first-child {
    flex-basis: 103px;
}
.charttabs .cut {
    justify-content: flex-start;
    padding-left: 16px;
}
.charttabs .long {
    flex-basis: 120px;
}
.charttabs button:not(.active, .long) {
    background: linear-gradient(#888, #888) right 4px / 1px 16px no-repeat;
}
.charttabs .active {
    border: 1px solid #000;
    border-top-color: #fff;
    background-color: #fff;
    color: #000;
}
.charttabs .scroll {
    flex: 1;
    height: 20px;
    padding: 6px 4px 0 0;
    border-top: 1px solid #000;
}
.scroll::after {
    content: "";
    float: right;
    border: 5px solid transparent;
    border-right-color: #999;
    border-left: 0;
}

/* terminal */
.terminal {
    display: flex;
    flex: 0 0 135px;
    padding-top: 4px;
    border-bottom: 1px solid #a0a0a0;
}
.side {
    display: flex;
    flex-direction: column;
    flex: 0 0 18px;
    padding-left: 2px;
}
.close {
    height: 14px;
    width: 15px;
    margin-bottom: 3px;
}
.side span {
    flex: 1;
    width: 16px;
    margin-bottom: 2px;
    padding-top: 4px;
    background: linear-gradient(#b9cbde, #d5e2ee);
    line-height: 14px;
    writing-mode: vertical-rl;
    transform: rotate(180deg);
}
.panel {
    display: flex;
    flex-direction: column;
    flex: 1;
    min-width: 0;
    border-top: 1px solid #909090;
    border-left: 1px solid #909090;
    background: #fff;
}
.mini {
    width: 16px;
    height: 18px;
    margin-right: 8px;
    vertical-align: middle;
}
table {
    width: 100%;
    border-collapse: separate;
    border-spacing: 0;
    table-layout: fixed;
}
.c-order { width: 187px; }
.c-time { width: 260px; }
.c-type { width: 130px; }
.c-vol { width: 102px; }
.c-price { width: 144px; }
th,
td {
    height: 24px;
    padding: 0 5px 0 0;
    border-right: 1px solid #c8c8c8;
    overflow: hidden;
    font-weight: 400;
    line-height: 20px;
    text-align: right;
}
th {
    border-right-color: #e5e5e5;
    border-bottom: 1px solid #c8c8c8;
}
th:first-child {
    padding-left: 6px;
    text-align: left;
}
td:first-child {
    padding-left: 3px;
    text-align: left;
}
th:last-child {
    padding: 0;
    border-right: 0;
}
td:last-child {
    padding-right: 2px;
    border-right: 0;
}
.sort {
    margin-left: 8px;
    color: #888;
}
.total td {
    border: 0;
    background-color: #c6c6c6;
    font-size: 14px;
    font-weight: 700;
}
.total span {
    margin-right: 6px;
}
.peek {
    display: flex;
    flex-direction: column;
    gap: 5px;
    padding-top: 2px;
}
.peek span {
    padding-left: 6px;
}
.peek .mini {
    margin-left: 3px;
}
.peek .total {
    height: 24px;
    line-height: 22px;
    background-color: #c6c6c6;
}
.tabs {
    display: flex;
    align-items: flex-start;
    margin-top: auto;
    height: 29px;
    background-color: #f0f0f0;
    border-top: 1px solid #000;
    color: #777;
}
.tabs button {
    height: 22px;
    padding: 0 13px 0 12px;
    background: linear-gradient(#888, #888) right 4px / 1px 16px no-repeat;
}
.tabs .active {
    width: 81px;
    height: 25px;
    margin: -1px 0 0 2px;
    padding: 0 24px 0 12px;
    border: 1px solid #000;
    border-top: 0;
    background: #fff;
    color: #000;
}
.tabs sub {
    align-self: flex-end;
    margin-left: 1px;
    color: #d81e1e;
    font-size: 10px;
    font-weight: 700;
    line-height: 10px;
}

/* status bar */
.status {
    display: flex;
    flex: 0 0 27px;
    align-items: center;
    border-top: 1px solid #fff;
}
.hint {
    flex: 1;
    padding-left: 2px;
}
.cell {
    display: flex;
    align-items: center;
    width: 87px;
    height: 23px;
    padding-left: 5px;
    border-left: 1px solid #a0a0a0;
}
.cell.profile {
    width: 138px;
}
.cell.time {
    width: 129px;
}
.cell.traffic {
    width: 121px;
    gap: 6px;
}

/* taskbar */
.taskbar {
    display: flex;
    align-items: center;
    flex: 0 0 48px;
    gap: 2px;
    padding-left: 2px;
    background-color: #070f15;
    color: #fff;
}
.start {
    width: 104px;
    height: 44px;
    border: 1px solid #fff;
    background-color: #f0f0f0;
    color: #000;
    font-size: 12px;
    font-weight: 700;
    justify-content: flex-start;
    padding-left: 3px;
    gap: 1px;
}
.edge .start {
    flex: none;
}
.shell {
    width: 36px;
    height: 38px;
}
.app {
    width: 57px;
    height: 48px;
    padding-top: 2px;
}
.app.open {
    background: linear-gradient(#f8cfa0, #f8cfa0) center bottom / 48px 2px no-repeat;
}
.app.current {
    width: 60px;
    background-color: #3b4146;
    background-size: 100% 2px;
}
.tray {
    display: flex;
    align-items: center;
    gap: 9px;
    margin-left: auto;
    margin-right: -4px;
}
.chevron {
    margin-left: 18px;
}
.lang {
    margin-left: 3px;
}
.clock {
    width: 92px;
    line-height: 22px;
    text-align: center;
}
.notif {
    margin-left: 4px;
}
```
